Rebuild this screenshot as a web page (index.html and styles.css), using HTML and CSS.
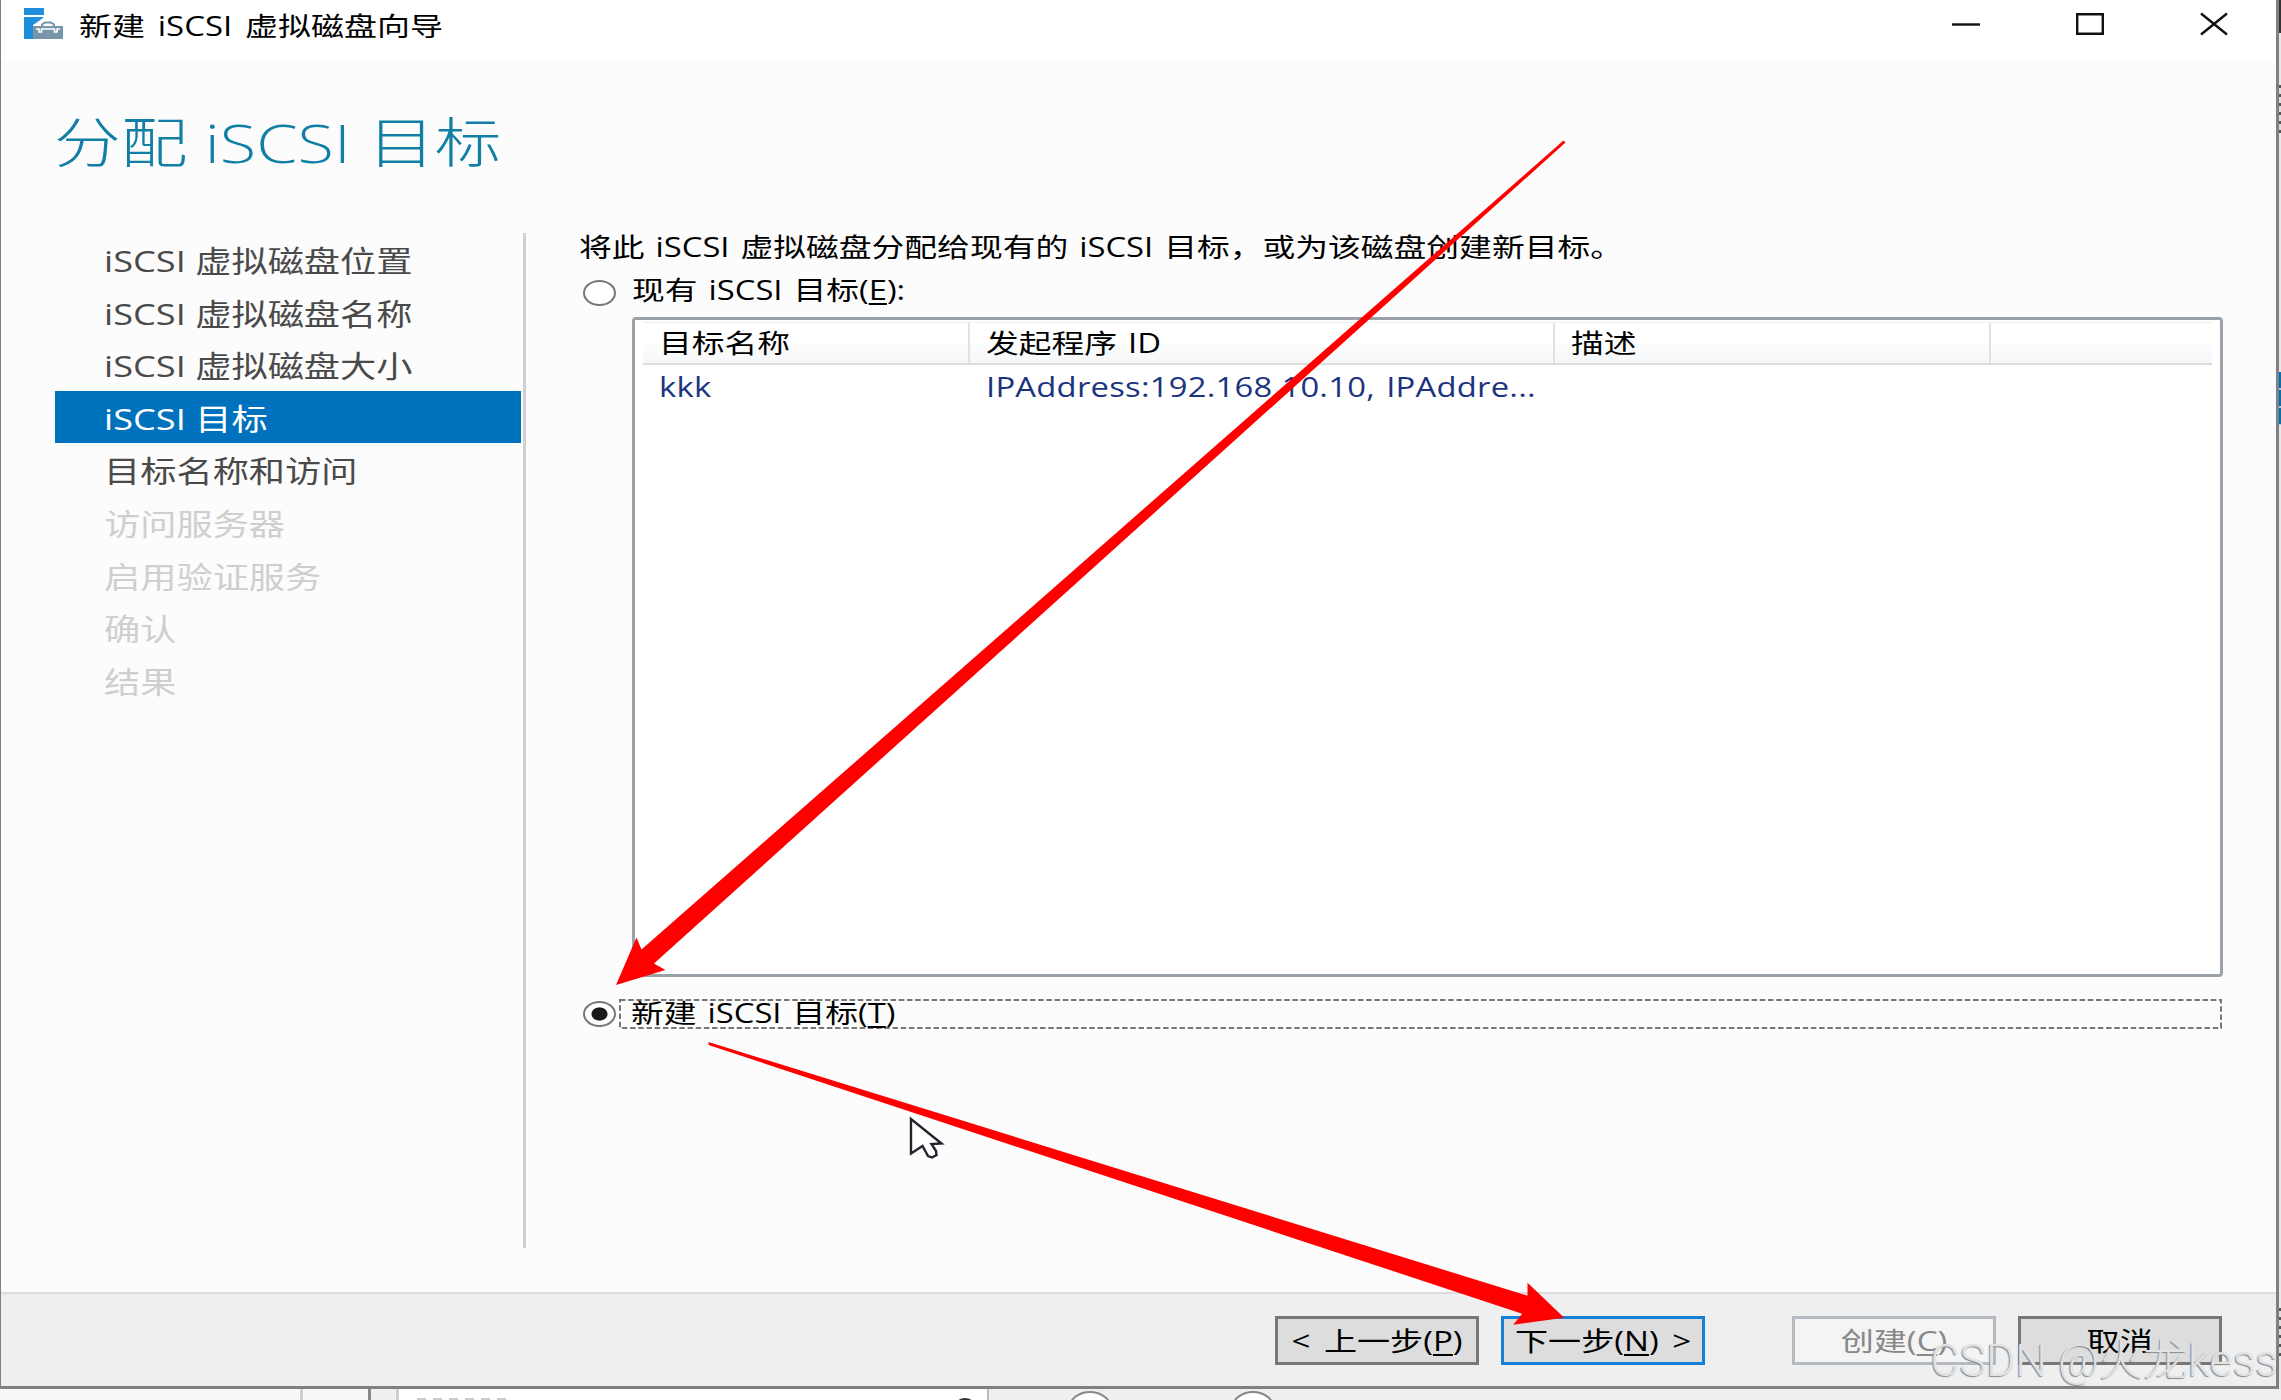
FILE: index.html
```html
<!DOCTYPE html>
<html lang="zh">
<head>
    <meta charset="UTF-8">
    <title>新建 iSCSI 虚拟磁盘向导</title>
    <link rel="stylesheet" href="styles.css">
</head>
<body>
    <div class="screen">
        <div class="window">
            <div class="titlebar">
                <svg class="app-icon" width="40" height="32" viewBox="0 0 40 32">
                    <path fill="#1e8fdd" d="M0 0h20v7H0zM0 9h20l-5 4-6 4v14H0z"/>
                    <path fill="#7894a8" d="M9 18h30v13H9z"/>
                    <path fill="none" stroke="#7894a8" stroke-width="2" d="M18 18v-1.500l3-2h6l3 2V18"/>
                    <path fill="none" stroke="#fff" stroke-width="1.6" d="M12 21h3v3h2.500v-3h13v3H33v-3h3"/>
                </svg>
                <span class="text">新建 iSCSI 虚拟磁盘向导</span>
                <div class="controls">
                    <svg width="28" height="24" viewBox="0 0 28 24"><path d="M0 12.500h28"/></svg>
                    <svg width="28" height="24" viewBox="0 0 28 24"><path d="M1.200 2.200h25.600v19.600H1.200z"/></svg>
                    <svg width="28" height="24" viewBox="0 0 28 24"><path d="M1 1.500l26 21M27 1.500l-26 21"/></svg>
                </div>
            </div>

            <h1><span class="text">分配 iSCSI 目标</span></h1>

            <div class="main">
                <ul class="steps">
                    <li><span class="text">iSCSI 虚拟磁盘位置</span></li>
                    <li><span class="text">iSCSI 虚拟磁盘名称</span></li>
                    <li><span class="text">iSCSI 虚拟磁盘大小</span></li>
                    <li class="active"><span class="text">iSCSI 目标</span></li>
                    <li><span class="text">目标名称和访问</span></li>
                    <li class="disabled"><span class="text">访问服务器</span></li>
                    <li class="disabled"><span class="text">启用验证服务</span></li>
                    <li class="disabled"><span class="text">确认</span></li>
                    <li class="disabled"><span class="text">结果</span></li>
                </ul>

                <div class="content">
                    <p><span class="text">将此 iSCSI 虚拟磁盘分配给现有的 iSCSI 目标，或为该磁盘创建新目标。</span></p>
                    <div class="option">
                        <span class="radio"></span>
                        <label><span class="text">现有 iSCSI 目标(<u>E</u>):</span></label>
                    </div>
                    <div class="list">
                        <div class="list-head">
                            <div><span class="text">目标名称</span></div>
                            <div><span class="text">发起程序 ID</span></div>
                            <div><span class="text">描述</span></div>
                            <div></div>
                        </div>
                        <div class="list-row">
                            <div><span class="text">kkk</span></div>
                            <div><span class="text">IPAddress:192.168.10.10, IPAddre...</span></div>
                        </div>
                    </div>
                    <div class="option option-new">
                        <span class="radio checked"></span>
                        <label class="focus">
                            <svg width="100%" height="100%"><rect x="1" y="1" width="1601" height="28"/></svg>
                            <span class="text">新建 iSCSI 目标(<u>T</u>)</span>
                        </label>
                    </div>
                </div>
            </div>

            <div class="footer">
                <button><span class="text">&lt; 上一步(<u>P</u>)</span></button>
                <button class="default"><span class="text">下一步(<u>N</u>) &gt;</span></button>
                <button class="off"><span class="text">创建(<u>C</u>)</span></button>
                <button><span class="text">取消</span></button>
            </div>
        </div>

        <!-- 右侧露出的后方窗口 -->
        <div class="behind-right">
            <i class="dark"></i>
            <i class="marks"></i>
            <i class="blue"></i>
            <i class="marks marks-low"></i>
        </div>

        <!-- 底部露出的后方窗口 -->
        <div class="behind-bottom">
            <div class="pane pane-a"></div>
            <div class="pane pane-b"></div>
            <div class="pane pane-c"></div>
            <div class="pane pane-d"><i class="hint"></i><i class="blob"></i></div>
            <div class="pane pane-e"><i class="ring"></i><i class="ring"></i></div>
        </div>

        <svg class="overlay" width="2281" height="1400" viewBox="0 0 2281 1400">
            <path class="cursor" d="M911 1119v34.500l11.500-7.500 5.500 10 4 1.500 4.500-2.500-.5-4-4.500-7 10-.5z"/>
            <path class="arrow" d="M1563.500 140.500l2 2L654 963.500l11.500 6.500L616 985l20.500-47.500 5 12z"/>
            <path class="arrow" d="M708.500 1042l819 253.700v-13l36.700 35-51 7 9-11L708.500 1045z"/>
        </svg>
        <div class="watermark">CSDN @火龙kess</div>
    </div>
</body>
</html>
```
FILE: styles.css
```css
* {
    box-sizing: border-box;
}
body {
    margin: 0;
    font-family: "Open Sans", "Noto Sans CJK SC", sans-serif;
    font-size: 26.7px;
    color: #000;
}
.screen {
    position: relative;
    width: 2281px;
    height: 1400px;
    overflow: hidden;
    background-color: #efefef;
    display: grid;
    grid-template-columns: 2279px 2px;
    grid-template-rows: 1389px 11px;
}
/* 文字横向拉宽 */
.text {
    display: inline-block;
    white-space: pre;
    word-spacing: 2px;
    transform: scaleX(1.228);
    transform-origin: left center;
}
u {
    text-decoration-thickness: 2px;
    text-underline-offset: 3px;
}

.window {
    display: flex;
    flex-direction: column;
    background-color: #fcfcfc;
    border: solid #808080;
    border-width: 0 3px 3px 1px;
}
.titlebar {
    height: 60px;
    padding: 0 48px 12px 23px;
    display: flex;
    align-items: center;
    background-color: #fff;
}
.titlebar .text {
    word-spacing: 3.5px;
    transform: scaleX(1.235);
}
.app-icon {
    margin-right: 15px;
}
.controls {
    margin-left: auto;
    display: flex;
    gap: 96px;
}
.controls svg {
    fill: none;
    stroke: #111;
    stroke-width: 2.4;
}
h1 {
    margin: 0;
    padding: 42px 0 0 53px;
    height: 173px;
    font-size: 54px;
    line-height: 80px;
    font-weight: 300;
    color: #117fa5;
}
h1 .text {
    word-spacing: 0;
    transform: scaleX(1.235);
}

.main {
    flex: 1;
    display: flex;
}
.steps {
    width: 526px;
    height: 1015px;
    margin: 0;
    padding: 0 2px 0 54px;
    list-style: none;
    border-right: 3px solid #d0d0d0;
    font-size: 29.7px;
    color: #4a4a4a;
}
.steps .text {
    word-spacing: 0;
    transform: scaleX(1.22);
}
.steps li {
    height: 52.600px;
    line-height: 56px;
    padding-left: 49px;
}
.steps .active {
    background-color: #0072bd;
    color: #fff;
}
.steps .disabled {
    color: #cfcfcf;
}

.content {
    flex: 1;
    padding: 0 53px 0 53px;
}
.content p {
    margin: 0;
    height: 44px;
    line-height: 28px;
}
.option {
    display: flex;
    align-items: center;
    height: 30px;
    padding-left: 4px;
}
.radio {
    width: 33px;
    height: 26px;
    margin-top: 2px;
    border: 2px solid #777;
    border-radius: 50%;
    background-color: #fff;
}
.radio.checked {
    margin-top: 0;
    background: radial-gradient(ellipse 8.5px 7px at center, #1a1a1a 88%, #fff 100%);
}
.option label {
    margin-left: 16px;
    line-height: 28px;
    margin-top: -4px;
}
.list {
    width: 1591px;
    height: 660px;
    margin: 10px 0 0 53px;
    padding: 2px 8px;
    background-color: #fff;
    border: 3px solid #9ba1a9;
    border-radius: 4px;
}
.list-head {
    display: grid;
    grid-template-columns: 327px 585px 436px 1fr;
    height: 43px;
    border-top: 1px solid #eee;
    border-bottom: 2px solid #dcdcdc;
    background: linear-gradient(#fff 40%, #f5f7f9);
}
.list-head div {
    line-height: 40px;
    padding-left: 16px;
    border-right: 2px solid #e0e2e4;
}
.list-head div:last-child {
    border: none;
}
.list-row {
    display: grid;
    grid-template-columns: 327px 1fr;
    line-height: 44px;
    color: #1c3480;
}
.list-row div {
    padding-left: 16px;
}
.list-row .text {
    letter-spacing: 0.2px;
}
.option-new {
    height: 30px;
    margin-top: 22px;
}
.option .focus {
    position: relative;
    width: 1603px;
    height: 30px;
    margin: 0 0 0 3px;
    padding-left: 12px;
    line-height: 27px;
}
.focus svg {
    position: absolute;
    left: 0;
    top: 0;
    fill: none;
    stroke: #777;
    stroke-width: 2;
    stroke-dasharray: 5.500 2.700;
}

.footer {
    height: 94px;
    padding: 22px 54px 0;
    display: flex;
    justify-content: flex-end;
    gap: 22px;
    background-color: #efefef;
    border-top: 2px solid #dcdcdc;
}
.footer button {
    width: 204px;
    height: 49px;
    padding: 1px 0 0;
    font: inherit;
    color: #000;
    line-height: 42px;
    background-color: #ddd;
    border: 3px solid #777;
}
.footer .text {
    word-spacing: 4px;
    transform: scaleX(1.24);
    transform-origin: center;
}
.footer .default {
    border-color: #1480d8;
}
.footer .off {
    margin-left: 65px;
    color: #888;
    background-color: #f4f4f4;
    border-color: #b4babf;
}

.behind-right {
    background-color: #e8e8e8;
}
.behind-right i {
    display: block;
}
.dark {
    height: 33px;
    background-color: #333;
}
.marks {
    height: 48px;
    margin-top: 52px;
    background: repeating-linear-gradient(#555 0 3px, #ddd 3px 9px);
}
.blue {
    height: 53px;
    margin-top: 239px;
    background: repeating-linear-gradient(#0070b8 0 16px, #a8d0e8 16px 18px);
}
.marks-low {
    margin-top: 883px;
}

.behind-bottom {
    grid-column: 1 / 3;
    display: flex;
    overflow: hidden;
}
.pane-a {
    width: 303px;
    background-color: #f8f8f8;
    border-right: 3px solid #d0d0d0;
}
.pane-b {
    width: 68px;
    background-color: #f8f8f8;
    border-right: 3px solid #888;
}
.pane-c {
    width: 28px;
    border-right: 3px solid #d0d0d0;
}
.pane-d {
    width: 590px;
    display: flex;
    justify-content: space-between;
    padding: 9px 11px 0 18px;
    background-color: #fff;
    border-right: 2px solid #bbb;
}
.hint {
    width: 94px;
    height: 2px;
    background: repeating-linear-gradient(90deg, #ccc 0 9px, #fff 9px 16px);
}
.blob {
    width: 22px;
    height: 20px;
    border-radius: 50%;
    background-color: #333;
}
.pane-e {
    display: flex;
    gap: 119px;
    padding: 2px 0 0 79px;
}
.ring {
    width: 44px;
    height: 36px;
    border: 2px solid #888;
    border-radius: 50%;
    background-color: #fff;
}

.overlay {
    position: absolute;
    left: 0;
    top: 0;
}
.arrow {
    fill: #f00;
}
.cursor {
    fill: #fff;
    stroke: #222430;
    stroke-width: 2.4;
}
.watermark {
    position: absolute;
    right: 3px;
    bottom: 9px;
    font: 300 44.7px/60px Roboto, "Noto Sans CJK SC", sans-serif;
    color: #e2e2e2;
    text-shadow: -1px 1px 1px #8a8a8a;
    white-space: nowrap;
}
```
